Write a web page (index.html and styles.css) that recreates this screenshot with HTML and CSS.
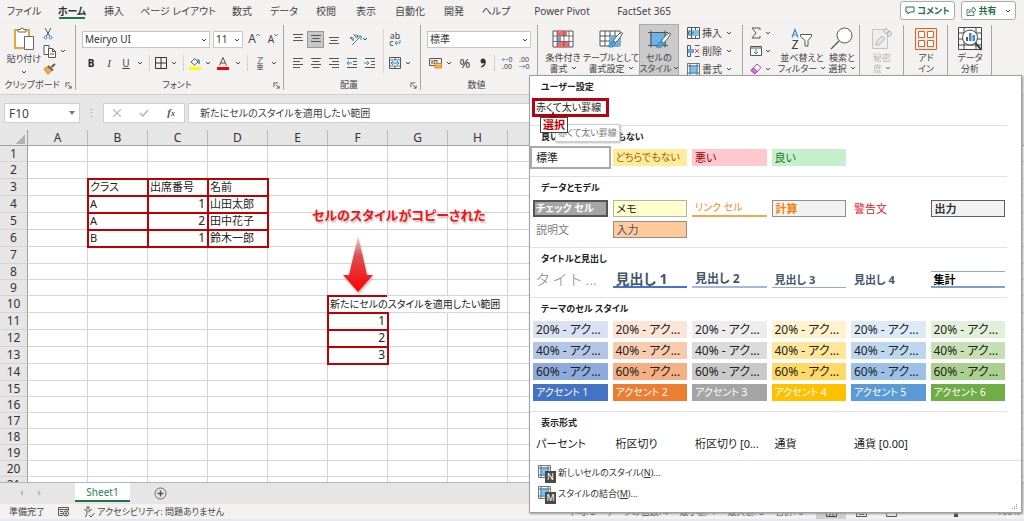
FILE: index.html
```html
<!DOCTYPE html>
<html lang="ja">
<head>
<meta charset="utf-8">
<title>セルのスタイル</title>
<link rel="stylesheet" href="styles.css">
</head>
<body>
<svg class="symbols" width="0" height="0" aria-hidden="true">
  <symbol id="chev" viewBox="0 0 6 4"><path d="M1 1l2 2 2-2" fill="none" stroke="#444" stroke-width="1"/></symbol>
  <symbol id="launch" viewBox="0 0 8 8"><path d="M1 6V1h5M3 3l4 4M7 4v3H4" fill="none" stroke="#555" stroke-width="1"/></symbol>
  <symbol id="brush" viewBox="0 0 16 18"><path d="M14.500 1.500C12 2.500 8.500 6 6.500 9.500l2 2C11.500 9 15 4.500 15.500 2z" fill="#fff" stroke="#555"/><path d="M6 10C3.500 10 3.500 13 1 15.500c3 1.500 7 .5 7.500-3z" fill="#4a9edb" stroke="#2f7fbf" stroke-width=".6"/></symbol>
  <symbol id="cellgrid" viewBox="0 0 13 13"><path d="M.5.5h12v12H.5z" fill="#fff" stroke="#777"/><path d="M.5 3h12M.5 10h12M3 .5v12M10 .5v12" stroke="#666" fill="none"/><path d="M3 3h7v7H3z" fill="#7ec0ee" stroke="#3b8ecb"/></symbol>
</svg>

<nav class="tabs">
  <button class="tab w48">ファイル</button>
  <button class="tab w48 active">ホーム</button>
  <button class="tab w36">挿入</button>
  <button class="tab w92">ページ レイアウト</button>
  <button class="tab w36">数式</button>
  <button class="tab w48">データ</button>
  <button class="tab w36">校閲</button>
  <button class="tab w44">表示</button>
  <button class="tab w44">自動化</button>
  <button class="tab w44">開発</button>
  <button class="tab w40">ヘルプ</button>
  <button class="tab w92">Power Pivot</button>
  <button class="tab w72">FactSet 365</button>
  <div class="tab-actions">
    <button class="pill"><svg width="10" height="9" viewBox="0 0 10 9"><path d="M1 1h8v5H5L3 8V6H1z" fill="none" stroke="#217346"/></svg>コメント</button>
    <button class="pill"><svg width="10" height="10" viewBox="0 0 10 10"><path d="M3 3.500H1v6h7V7M3 7c0-3 2-4 4-4V1l3 3-3 3V5C5 5 4 5.500 3 7z" fill="none" stroke="#217346" stroke-width=".8"/></svg>共有<svg class="chev" viewBox="0 0 6 4"><use href="#chev"/></svg></button>
  </div>
</nav>

<div class="ribbon">
  <section class="group g-clip">
    <div class="group-body">
      <button class="big">
        <svg width="22" height="24" viewBox="0 0 22 24"><path d="M2 3h14v18H2z" fill="#fff" stroke="#e8a33d" stroke-width="2"/><path d="M5 5V2.500h2.500a1.500 1.500 0 0 1 3 0H13V5z" fill="#fff" stroke="#666"/><path d="M11.500 9.500h9v13h-9z" fill="#fff" stroke="#666"/></svg>
        <span>貼り付け</span><svg class="chev" viewBox="0 0 6 4"><use href="#chev"/></svg>
      </button>
      <div class="stack">
        <button class="tool" aria-label="切り取り"><svg width="10" height="13" viewBox="0 0 10 13"><path d="M2 1l4.500 8M8 1L3.500 9" stroke="#555" fill="none"/><circle cx="2.500" cy="10.500" r="1.500" fill="none" stroke="#2f8fd0"/><circle cx="7.500" cy="10.500" r="1.500" fill="none" stroke="#2f8fd0"/></svg></button>
        <button class="tool" aria-label="コピー"><svg width="14" height="13" viewBox="0 0 14 13"><path d="M1 .5h5v9H1z" fill="#fff" stroke="#555"/><path d="M5.500 3.500h4l3 3v6h-7zM9.500 3.500v3h3M7 9h4" fill="#fff" stroke="#555"/></svg><svg class="chev" viewBox="0 0 6 4"><use href="#chev"/></svg></button>
        <button class="tool" aria-label="書式のコピー"><svg width="13" height="12" viewBox="0 0 13 12"><path d="M12 1L8.500 4M5 3l5 4.500" stroke="#555" stroke-width="2" fill="none"/><path d="M4 3.500L1 6l4 5.500 4-4z" fill="#f0a84a" stroke="#c77b1d" stroke-width=".7"/></svg></button>
      </div>
    </div>
    <div class="group-label">クリップボード<svg class="launch" viewBox="0 0 8 8"><use href="#launch"/></svg></div>
  </section>

  <section class="group g-font">
    <div class="rows">
      <div class="row gap3">
        <span class="combo w128"><select aria-label="フォント"><option>Meiryo UI</option></select><svg class="chev" viewBox="0 0 6 4"><use href="#chev"/></svg></span>
        <span class="combo w30"><select aria-label="サイズ"><option>11</option></select><svg class="chev" viewBox="0 0 6 4"><use href="#chev"/></svg></span>
        <button class="tool w16 grow" aria-label="拡大">A<svg width="4" height="4" viewBox="0 0 4 4"><path d="M0 3l2-2 2 2" stroke="#2f8fd0" fill="none"/></svg></button>
        <button class="tool w16 shrink" aria-label="縮小">A<svg width="4" height="4" viewBox="0 0 4 4"><path d="M0 1l2 2 2-2" stroke="#2f8fd0" fill="none"/></svg></button>
      </div>
      <div class="row">
        <button class="tool w18 b">B</button><button class="tool w18 i">I</button><button class="tool w16 u">U</button><button class="tool w12" aria-label="下線"><svg class="chev" viewBox="0 0 6 4"><use href="#chev"/></svg></button>
        <i class="vsep"></i>
        <button class="tool w14" aria-label="罫線"><svg width="12" height="12" viewBox="0 0 12 12"><path d="M.5.5h11v11H.5zM6 0v12M0 6h12" fill="none" stroke="#333"/></svg></button><button class="tool w12" aria-label="罫線の種類"><svg class="chev" viewBox="0 0 6 4"><use href="#chev"/></svg></button>
        <i class="vsep"></i>
        <button class="tool w14" aria-label="塗りつぶし"><svg width="12" height="13" viewBox="0 0 12 13"><path d="M2 5l4-3.500L9 5 5.500 8z" fill="#fff" stroke="#555"/><path d="M8.500 2.500C10 3 10.500 5 10 7" stroke="#2f8fd0" stroke-width="1.500" fill="none"/><path d="M0 10h12v3H0z" fill="#ff0"/></svg></button><button class="tool w12" aria-label="塗りつぶしの色"><svg class="chev" viewBox="0 0 6 4"><use href="#chev"/></svg></button>
        <button class="tool w18" aria-label="フォントの色"><svg width="12" height="13" viewBox="0 0 12 13"><path d="M2.500 8.500L6 .5l3.500 8M3.500 6h5" stroke="#555" fill="none"/><path d="M0 10h12v3H0z" fill="#f00"/></svg></button><button class="tool w12" aria-label="文字色"><svg class="chev" viewBox="0 0 6 4"><use href="#chev"/></svg></button>
        <i class="vsep"></i>
        <button class="tool w16 ruby"><span>ア</span><span>亜</span></button><button class="tool w12" aria-label="ふりがな"><svg class="chev" viewBox="0 0 6 4"><use href="#chev"/></svg></button>
      </div>
    </div>
    <div class="group-label">フォント<svg class="launch" viewBox="0 0 8 8"><use href="#launch"/></svg></div>
  </section>

  <section class="group g-align">
    <div class="group-body">
      <div class="rows">
        <div class="row">
          <button class="tool w18" aria-label="上揃え"><svg width="12" height="12" viewBox="0 0 12 12"><path d="M1 1.500h10M2.500 4.500h7M1 7.500h10" stroke="#555"/></svg></button>
          <button class="tool w18 on" aria-label="中央揃え"><svg width="12" height="12" viewBox="0 0 12 12"><path d="M1 2.500h10M2.500 5.500h7M1 8.500h10" stroke="#555"/></svg></button>
          <button class="tool w18" aria-label="下揃え"><svg width="12" height="12" viewBox="0 0 12 12"><path d="M1 4.500h10M2.500 7.500h7M1 10.500h10" stroke="#555"/></svg></button>
          <button class="tool w30" aria-label="方向"><svg width="13" height="13" viewBox="0 0 13 13"><path d="M3 12L12 3M12 3v4M12 3H8" stroke="#2f8fd0" fill="none"/><path d="M1.500 5.500a1.500 1.500 0 1 1 2.500 1.500M1 4l3.500 4M4.500 1l3 4a1.500 1.500 0 1 0-1-3" fill="none" stroke="#555" stroke-width=".9"/></svg><svg class="chev" viewBox="0 0 6 4"><use href="#chev"/></svg></button>
        </div>
        <div class="row">
          <button class="tool w18" aria-label="左揃え"><svg width="12" height="12" viewBox="0 0 12 12"><path d="M1 1.500h10M1 4.500h7M1 7.500h10M1 10.500h7" stroke="#555"/></svg></button>
          <button class="tool w18" aria-label="中央"><svg width="12" height="12" viewBox="0 0 12 12"><path d="M1 1.500h10M2.500 4.500h7M1 7.500h10M2.500 10.500h7" stroke="#555"/></svg></button>
          <button class="tool w18" aria-label="右揃え"><svg width="12" height="12" viewBox="0 0 12 12"><path d="M1 1.500h10M4 4.500h7M1 7.500h10M4 10.500h7" stroke="#555"/></svg></button>
          <button class="tool w18" aria-label="インデント解除"><svg width="12" height="12" viewBox="0 0 12 12"><path d="M1 1.500h10M7 4.500h4M7 7.500h4M1 10.500h10" stroke="#555"/><path d="M6 6H1m2-2L1 6l2 2" stroke="#2f8fd0" fill="none"/></svg></button>
          <button class="tool w18" aria-label="インデント"><svg width="12" height="12" viewBox="0 0 12 12"><path d="M1 1.500h10M7 4.500h4M7 7.500h4M1 10.500h10" stroke="#555"/><path d="M0 6h5M3 4l2 2-2 2" stroke="#2f8fd0" fill="none"/></svg></button>
        </div>
      </div>
      <i class="vsep tall"></i>
      <div class="rows">
        <div class="row"><button class="tool w14 wrap" aria-label="折り返し"><span>ab</span><span>c<svg width="7" height="6" viewBox="0 0 7 6"><path d="M6 0v3H1m2-2L1 3l2 2" stroke="#2f8fd0" fill="none"/></svg></span></button></div>
        <div class="row"><button class="tool w14" aria-label="結合"><svg width="12" height="12" viewBox="0 0 12 12"><path d="M.5.5h11v11H.5zM.5 3h11M.5 9h11M6 .5V3M6 9v2.500" stroke="#555" fill="#fff"/><path d="M1 3.500h10v5H1z" fill="#d6ecfa"/><path d="M2 6h8M4 4L2 6l2 2M8 4l2 2-2 2" stroke="#2f8fd0" fill="none"/></svg></button><button class="tool w12" aria-label="結合の種類"><svg class="chev" viewBox="0 0 6 4"><use href="#chev"/></svg></button></div>
      </div>
    </div>
    <div class="group-label">配置<svg class="launch" viewBox="0 0 8 8"><use href="#launch"/></svg></div>
  </section>

  <section class="group g-num">
    <div class="rows">
      <div class="row"><span class="combo w104"><select aria-label="表示形式"><option>標準</option></select><svg class="chev" viewBox="0 0 6 4"><use href="#chev"/></svg></span></div>
      <div class="row">
        <button class="tool w16" aria-label="通貨"><svg width="13" height="12" viewBox="0 0 13 12"><path d="M.5 1.500h12v7H.5zM3 3v4M5 3.500h3v3H5z" fill="none" stroke="#555"/><path d="M6 6.500h6.500V11H6zM6 9h6" fill="#f6c27a" stroke="#e08a1e"/></svg></button><button class="tool w12" aria-label="通貨の種類"><svg class="chev" viewBox="0 0 6 4"><use href="#chev"/></svg></button>
        <button class="tool w20 pct">%</button><button class="tool w16" aria-label="桁区切り"><svg width="6" height="10" viewBox="0 0 6 10"><circle cx="3" cy="3" r="2.500" fill="#333"/><path d="M5 3c.5 3-1 5-4 6" stroke="#333" stroke-width="1.300" fill="none"/></svg></button>
        <i class="vsep"></i>
        <button class="tool w16 dec"><span><em>←</em>0</span><span>.00</span></button><button class="tool w18 dec"><span>.00</span><span><em>→</em>0</span></button>
      </div>
    </div>
    <div class="group-label">数値</div>
  </section>

  <section class="group g-style">
    <button class="big w40"><svg width="22" height="22" viewBox="0 0 22 22"><path d="M1 3h20v16H1z" fill="#fff" stroke="#555"/><path d="M5 3h10v5H5zM5 13.500h12V19H5z" fill="#f9696b"/><path d="M5 8.500h4v5H5z" fill="#5ea9dd"/><path d="M1 8h20M1 13.500h20M5 3v16M12 3v16M17 3v16" stroke="#555" fill="none" stroke-width=".8"/></svg><span>条件付き<br>書式<svg class="chev" viewBox="0 0 6 4"><use href="#chev"/></svg></span></button>
    <button class="big w56"><svg width="24" height="22" viewBox="0 0 24 22"><path d="M1 3h20v15H1zM1 8h20M1 13h20M6 3v15M11 3v15M16 3v15" fill="#fff" stroke="#555"/><path d="M11 8h10v10H11z" fill="#6db3e8"/><use href="#brush" x="8" y="3" width="16" height="18"/></svg><span>テーブルとして<br>書式設定<svg class="chev" viewBox="0 0 6 4"><use href="#chev"/></svg></span></button>
    <button class="big w40 on"><svg width="24" height="22" viewBox="0 0 24 22"><path d="M1 4h20M1 17h20M4 2v17M18 2v17" fill="none" stroke="#555"/><path d="M4 4h14v13H4z" fill="#6db3e8" stroke="#555"/><use href="#brush" x="8" y="3" width="16" height="18"/></svg><span>セルの<br>スタイル<svg class="chev" viewBox="0 0 6 4"><use href="#chev"/></svg></span></button>
  </section>

  <section class="group g-cells">
    <div class="stack">
      <button class="line"><svg width="13" height="12" viewBox="0 0 13 12"><path d="M.5.5h12v11H.5zM.5 4h12M.5 8h12M4.500.5v11M8.500.5v11" fill="#fff" stroke="#555"/><path d="M5 3h7v6H5z" fill="#7ec0ee"/><path d="M7 6H1m2-2L1 6l2 2" stroke="#1976b8" fill="none"/></svg><span>挿入</span><svg class="chev" viewBox="0 0 6 4"><use href="#chev"/></svg></button>
      <button class="line"><svg width="13" height="12" viewBox="0 0 13 12"><path d="M.5 11.500V.5h3v11zM8 .5h4.500M8 11.500h4.500" fill="none" stroke="#555"/><path d="M1 4h6v4H1z" fill="#5ea9dd"/><path d="M8 4l4 4M12 4L8 8" stroke="#e34b4b"/></svg><span>削除</span><svg class="chev" viewBox="0 0 6 4"><use href="#chev"/></svg></button>
      <button class="line"><svg width="13" height="13" viewBox="0 0 13 13"><use href="#cellgrid"/></svg><span>書式</span><svg class="chev" viewBox="0 0 6 4"><use href="#chev"/></svg></button>
    </div>
  </section>

  <section class="group g-edit">
    <div class="stack">
      <button class="tool" aria-label="合計"><svg width="12" height="12" viewBox="0 0 12 12"><path d="M10 3V1H2l4 5-4 5h8V9" fill="none" stroke="#555"/></svg><svg class="chev" viewBox="0 0 6 4"><use href="#chev"/></svg></button>
      <button class="tool" aria-label="フィル"><svg width="12" height="12" viewBox="0 0 12 12"><path d="M.5 1.500h11v9H.5zM.5 3h11" fill="#fff" stroke="#555"/><path d="M6 4v5M4 7l2 2 2-2" stroke="#2f8fd0" fill="none"/></svg><svg class="chev" viewBox="0 0 6 4"><use href="#chev"/></svg></button>
      <button class="tool" aria-label="クリア"><svg width="12" height="12" viewBox="0 0 12 12"><path d="M1 7.500L7 1l4 3.500L5 11z" fill="#fff" stroke="#a349a4"/><path d="M1 7.500L3.500 5l4 3.500L5 11z" fill="#c77fd0" stroke="#a349a4"/></svg><svg class="chev" viewBox="0 0 6 4"><use href="#chev"/></svg></button>
    </div>
    <button class="big w44"><svg width="22" height="22" viewBox="0 0 22 22"><path d="M1 9.500L4 1.500l3 8M2 7h4" stroke="#2f8fd0" fill="none" stroke-width="1.200"/><path d="M1.500 12.500h5l-5 8h5.500" stroke="#444" fill="none" stroke-width="1.200"/><path d="M9.500 6.500h11v2L17 12.500V18h-3v-5.500L9.500 8.500z" stroke="#555" fill="#fff"/></svg><span>並べ替えと<br>フィルター<svg class="chev" viewBox="0 0 6 4"><use href="#chev"/></svg></span></button>
    <button class="big w36"><svg width="24" height="24" viewBox="0 0 24 24"><circle cx="14.500" cy="8.500" r="7.500" fill="#fff" stroke="#555"/><path d="M9 14L1 22" stroke="#555" stroke-width="1.300"/></svg><span>検索と<br>選択<svg class="chev" viewBox="0 0 6 4"><use href="#chev"/></svg></span></button>
  </section>
  <section class="group g-one">
    <button class="big muted" disabled><svg width="22" height="24" viewBox="0 0 22 24"><path d="M1.500 2.500h15v19h-15z" fill="#eee" stroke="#bbb"/><path d="M5 15l6-6 3 3-6 6H5zM12 4l3-3 3 3-3 3zM16 7l3-3 2 3-3 3z" fill="#ddd" stroke="#aaa"/></svg><span>秘密<br>度<svg class="chev" viewBox="0 0 6 4"><use href="#chev"/></svg></span></button>
  </section>
  <section class="group g-one">
    <button class="big"><svg width="22" height="22" viewBox="0 0 22 22"><path d="M.5.500h21v21H.5z" fill="#fbe9df" stroke="#d9622b"/><path d="M3.500 3.500h6v6h-6zM12.500 3.500h6v6h-6zM3.500 12.500h6v6h-6zM12.500 12.500h6v6h-6z" fill="#fff" stroke="#d9622b"/></svg><span>アド<br>イン</span></button>
  </section>
  <section class="group g-one">
    <button class="big"><svg width="24" height="24" viewBox="0 0 24 24"><path d="M.5.500h23v22H.5zM0 6h24M0 12h24M0 18h24M6 0v22M18 0v22" fill="#fff" stroke="#444"/><circle cx="12" cy="10.500" r="7.500" fill="#fff" stroke="#444"/><path d="M8 10h2v4H8z" fill="#555"/><path d="M11 6h2.500v8H11zM14.500 8H17v6h-2.500z" fill="#3b8ecb"/><path d="M17.500 16l6 7" stroke="#444" stroke-width="2"/></svg><span>データ<br>分析</span></button>
  </section>
</div>

<div class="formula-row">
  <label class="namebox"><input aria-label="名前ボックス" value="F10"><svg width="6" height="4" viewBox="0 0 6 4"><path d="M0 0h6L3 4z" fill="#777"/></svg></label>
  <span class="dots">⋮</span>
  <div class="fx-buttons">
    <button aria-label="キャンセル"><svg width="8" height="8" viewBox="0 0 8 8"><path d="M0 0l8 8M8 0L0 8" stroke="#b5b5b5" stroke-width="1.200"/></svg></button>
    <button aria-label="入力"><svg width="10" height="8" viewBox="0 0 10 8"><path d="M1 4l3 3 5-6" stroke="#b5b5b5" stroke-width="1.500" fill="none"/></svg></button>
    <button class="fx">f<small>x</small></button>
  </div>
  <input class="formula" aria-label="数式バー" value="新たにセルのスタイルを適用したい範囲">
</div>

<main class="sheet">
  <table class="grid" id="grid"></table>
  <p class="callout">セルのスタイルがコピーされた</p>
  <svg class="callout-arrow" width="34" height="60" viewBox="0 0 34 60"><defs><linearGradient id="fade" x1="0" y1="0" x2="0" y2="1"><stop offset="0" stop-color="#f3a5a5" stop-opacity=".5"/><stop offset=".35" stop-color="#dc5050"/><stop offset="1" stop-color="#f00"/></linearGradient></defs><path d="M16 1l9 39h6L16 57 1 40h6z" fill="url(#fade)"/></svg>
</main>

<footer class="sheetbar">
  <span class="arrow left"></span><span class="arrow right"></span>
  <button class="sheet-tab">Sheet1</button>
  <button class="add" aria-label="新しいシート"><svg width="13" height="13" viewBox="0 0 13 13"><circle cx="6.500" cy="6.500" r="5.500" fill="none" stroke="#666"/><path d="M6.500 3.500v6M3.500 6.500h6" stroke="#555" stroke-width="1.500"/></svg></button>
</footer>
<div class="status">
  <span>準備完了</span>
  <svg width="12" height="11" viewBox="0 0 12 11"><path d="M.5 9.500v-8h10V5M.5 3.500h10M2 5.500h3M2 7.500h3M.5 9.500H5" fill="none" stroke="#555"/><circle cx="8" cy="7.500" r="2.500" fill="none" stroke="#444"/><circle cx="8" cy="7.500" r="1" fill="#444"/></svg>
  <span class="access"><svg width="12" height="12" viewBox="0 0 12 12"><circle cx="5" cy="1.800" r="1.200" fill="none" stroke="#555"/><path d="M1 3.500l3 1v3L2.500 11M9 3.500l-3 1v2M6 9l2 2 3.500-4" fill="none" stroke="#555"/></svg>アクセシビリティ: 問題ありません</span>
  <div class="stats"><span>平均: 2</span><span>データの個数: 4</span><span>最小値: 1</span><span>最大値: 3</span><span>合計: 6</span></div>
  <div class="views">
    <i class="view on"><svg width="11" height="10" viewBox="0 0 11 10"><path d="M.5.500h10v9H.5zM0 5h11M4 0v10M7 0v10" fill="none" stroke="#444"/></svg></i>
    <i class="view"><svg width="11" height="10" viewBox="0 0 11 10"><path d="M.5.500h10v9H.5zM3 2.500h5v5H3z" fill="none" stroke="#555"/></svg></i>
    <i class="view"><svg width="11" height="10" viewBox="0 0 11 10"><path d="M.5.500h10v9H.5z" fill="none" stroke="#555"/></svg></i>
  </div>
  <i class="knob"></i>
  <span class="zoom">100%</span>
</div>

<div class="menu">
  <section>
    <h2>ユーザー設定</h2>
    <div class="swatches"><button class="sw custom">赤くて太い罫線</button></div>
  </section>
  <section class="roomy">
    <h2>良い、悪い、どちらでもない</h2>
    <div class="swatches">
      <button class="sw current">標準</button><button class="sw neutral">どちらでもない</button><button class="sw bad">悪い</button><button class="sw good">良い</button>
    </div>
  </section>
  <section>
    <h2>データとモデル</h2>
    <div class="swatches">
      <button class="sw check">チェック セル</button><button class="sw memo">メモ</button><button class="sw link">リンク セル</button><button class="sw calc">計算</button><button class="sw warn">警告文</button><button class="sw out">出力</button>
      <button class="sw desc">説明文</button><button class="sw in">入力</button>
    </div>
  </section>
  <section>
    <h2>タイトルと見出し</h2>
    <div class="swatches">
      <button class="sw title">タ イ ト ...</button><button class="sw h-1">見出し 1</button><button class="sw h-2">見出し 2</button><button class="sw h-3">見出し 3</button><button class="sw h-4">見出し 4</button><button class="sw total">集計</button>
    </div>
  </section>
  <section class="roomy">
    <h2>テーマのセル スタイル</h2>
    <div class="swatches theme">
      <button class="sw a1 p20">20% - アク...</button><button class="sw a2 p20">20% - アク...</button><button class="sw a3 p20">20% - アク...</button><button class="sw a4 p20">20% - アク...</button><button class="sw a5 p20">20% - アク...</button><button class="sw a6 p20">20% - アク...</button>
      <button class="sw a1 p40">40% - アク...</button><button class="sw a2 p40">40% - アク...</button><button class="sw a3 p40">40% - アク...</button><button class="sw a4 p40">40% - アク...</button><button class="sw a5 p40">40% - アク...</button><button class="sw a6 p40">40% - アク...</button>
      <button class="sw a1 p60">60% - アク...</button><button class="sw a2 p60">60% - アク...</button><button class="sw a3 p60">60% - アク...</button><button class="sw a4 p60">60% - アク...</button><button class="sw a5 p60">60% - アク...</button><button class="sw a6 p60">60% - アク...</button>
      <button class="sw a1 full">アクセント 1</button><button class="sw a2 full">アクセント 2</button><button class="sw a3 full">アクセント 3</button><button class="sw a4 full">アクセント 4</button><button class="sw a5 full">アクセント 5</button><button class="sw a6 full">アクセント 6</button>
    </div>
  </section>
  <section class="last">
    <h2>表示形式</h2>
    <div class="swatches">
      <button class="sw">パーセント</button><button class="sw">桁区切り</button><button class="sw">桁区切り [0...</button><button class="sw">通貨</button><button class="sw">通貨 [0.00]</button>
    </div>
  </section>
  <div class="commands">
    <button class="cmd"><span class="cmd-icon"><svg width="13" height="13" viewBox="0 0 13 13"><use href="#cellgrid"/></svg><kbd>N</kbd></span>新しいセルのスタイル(<u>N</u>)...</button>
    <button class="cmd"><span class="cmd-icon"><svg width="13" height="13" viewBox="0 0 13 13"><use href="#cellgrid"/></svg><kbd>M</kbd></span>スタイルの結合(<u>M</u>)...</button>
    <svg class="grip" width="6" height="6" viewBox="0 0 6 6"><path d="M4 0h1v1H4zM2 2h1v1H2zM4 2h1v1H4zM0 4h1v1H0zM2 4h1v1H2zM4 4h1v1H4z" fill="#999"/></svg>
  </div>
  <div class="tooltip">赤くて太い罫線</div>
  <div class="pick">選択</div>
  <svg class="pick-arrow" width="6" height="7" viewBox="0 0 6 7"><path d="M3 0l3 7H0z" fill="#8a1010"/></svg>
</div>
<script src="grid.js"></script>
</body>
</html>
```
FILE: grid.js
```js
const columns = [..."ABCDEFGHIJKLMNOPQ"];
const cells = {
  B3: "クラス", C3: "出席番号", D3: "名前",
  B4: "A", C4: "1", D4: "山田太郎",
  B5: "A", C5: "2", D5: "田中花子",
  B6: "B", C6: "1", D6: "鈴木一郎",
  F10: "新たにセルのスタイルを適用したい範囲",
  F11: "1", F12: "2", F13: "3"
};
const shortRows = [1, 8, 9, 15, 16, 17, 18, 19, 20, 21];

function addCell(row, tag, text, className) {
  const cell = document.createElement(tag);
  cell.textContent = text;
  if (className) cell.className = className;
  row.append(cell);
}

const table = document.getElementById("grid");
const head = table.createTHead().insertRow();
addCell(head, "th", "", "corner");
columns.forEach(name => addCell(head, "th", name));

const body = table.createTBody();
for (let r = 1; r <= 21; r++) {
  const row = body.insertRow();
  if (shortRows.includes(r)) row.className = "short";
  addCell(row, "th", r);
  columns.forEach(name => {
    const key = name + r;
    const text = cells[key] || "";
    let className = "";
    if (key === "F10") className = "spill-start";
    else if (key === "G10") className = "spill";
    else if (text) className = /^\d+$/.test(text) ? "boxed num" : "boxed";
    addCell(row, "td", text, className);
  });
}
```
FILE: styles.css
```css
* { box-sizing: border-box; }
body {
  margin: 0;
  height: 100vh;
  display: flex;
  flex-direction: column;
  overflow: hidden;
  position: relative;
  background: #f3f2f1;
  color: #444;
  font: 10px/12px "Noto Sans", "Noto Sans CJK JP", sans-serif;
  font-feature-settings: "palt";
}
button, input, select {
  font: inherit;
  font-feature-settings: inherit;
  color: inherit;
  margin: 0;
  padding: 0;
  border: 0;
  background: none;
}
svg { flex: none; }
.symbols { position: absolute; }
.chev { width: 6px; height: 4px; }
.w12 { width: 12px; } .w14 { width: 14px; } .w16 { width: 16px; } .w18 { width: 18px; }
.w20 { width: 20px; } .w30 { width: 30px; } .w36 { width: 36px; } .w40 { width: 40px; }
.w44 { width: 44px; } .w48 { width: 48px; } .w56 { width: 56px; } .w72 { width: 72px; }
.w92 { width: 92px; } .w104 { width: 104px; } .w128 { width: 128px; }

/* tabs */
.tabs { display: flex; height: 23px; flex: none; }
.tab { flex: none; white-space: nowrap; height: 22px; }
.tab.active { font-weight: bold; color: #333; }
.tab.active::after { content: ""; display: block; width: 26px; height: 2px; margin: 0 auto -2px; background: #217346; }
.tab-actions { margin-left: auto; display: flex; gap: 6px; padding: 1px 8px 0 0; }
.pill {
  display: flex; align-items: center; justify-content: center; gap: 2px;
  width: 55px; height: 19px;
  background: #fff; border: 1px solid #aaa; border-radius: 3px;
  color: #217346; font-weight: bold; font-size: 9px; white-space: nowrap;
}
.pill .chev { margin-left: 6px; }

/* ribbon */
.ribbon { display: flex; flex: none; height: 72px; border-bottom: 1px solid #d0d0d0; box-shadow: 0 1px 2px #ccc; }
.group { position: relative; display: flex; flex: none; }
.group::after { content: ""; position: absolute; right: 0; top: 2px; bottom: 4px; width: 1px; background: #a6a6a6; }
.g-clip, .g-font, .g-align, .g-num { flex-direction: column; justify-content: space-between; }
.g-clip { width: 76px; }
.g-font { width: 208px; padding-left: 6px; }
.g-align { width: 137px; padding-left: 5px; }
.g-num { width: 117px; padding-left: 6px; }
.g-style { width: 141px; padding-left: 5px; }
.g-cells { width: 64px; padding-left: 8px; }
.g-edit { width: 117px; padding-left: 7px; }
.g-one { width: 44px; justify-content: center; }
.group-body { display: flex; }
.group-label { text-align: center; height: 15px; padding-right: 12px; position: relative; white-space: nowrap; font-size: 9px; }
.launch { position: absolute; right: 4px; top: 3px; width: 7px; height: 7px; }
.rows { display: flex; flex-direction: column; gap: 6px; padding-top: 7px; }
.row { display: flex; align-items: center; height: 18px; }
.gap3 { gap: 3px; }
.stack { display: flex; flex-direction: column; padding-top: 1px; }
.stack .tool { height: 18px; gap: 3px; justify-content: flex-start; }
.g-clip .stack { padding-left: 1px; }
.tool { display: flex; align-items: center; justify-content: center; flex: none; height: 18px; }
.tool.on { background: #c8c8c8; border: 1px solid #999; height: 17px; width: 17px; margin-right: 1px; }
.big { display: flex; flex-direction: column; align-items: center; text-align: center; gap: 1px; padding-top: 4px; line-height: 11px; white-space: nowrap; font-size: 9px; }
.big svg:first-child { height: 24px; }
.big span { display: block; }
.big span .chev { margin: 0 0 2px 3px; }
.g-clip .big { width: 42px; padding-left: 6px; gap: 2px; }
.g-clip .big > .chev { margin-top: 4px; }
.big.on { background: #cacaca; border: 1px solid #aaa; border-bottom: 0; height: 53px; padding-top: 3px; margin-top: 1px; }
.big.on svg:first-child { height: 23px; }
.big.on span .chev { margin-left: 1px; }
.muted { color: #aaa; opacity: .8; }
.line { display: flex; align-items: center; gap: 2px; height: 18px; }
.line span { width: 20px; text-align: left; margin-right: 2px; white-space: nowrap; }
.combo { position: relative; display: block; height: 17px; background: #fff; border: 1px solid #c6c6c6; }
.combo select { appearance: none; width: 100%; height: 15px; padding-left: 2px; line-height: 15px; color: #333; }
.combo .chev { position: absolute; right: 2px; top: 6px; }
.grow { font-size: 12px; } .shrink { font-size: 10px; }
.grow svg, .shrink svg { align-self: flex-start; margin-top: 3px; }
.b { font-weight: bold; color: #222; }
.i { font-family: "Liberation Serif", serif; font-style: italic; font-size: 11px; }
.u { text-decoration: underline; }
.pct { font-size: 13px; color: #333; }
.vsep { flex: none; width: 1px; height: 16px; margin: 0 4px 0 3px; background: #d2d2d2; }
.vsep.tall { height: 44px; margin: 6px 4px 0; }
.ruby, .wrap, .dec { flex-direction: column; line-height: 7px; font-size: 7px; }
.wrap { font-size: 9px; }
.dec span { display: block; white-space: nowrap; }
.dec em { font-style: normal; color: #1f87cc; }
.g-edit .big, .g-style .big { flex: none; }
.g-edit .stack { width: 30px; }

/* formula row */
.formula-row { display: flex; flex: none; height: 35px; padding: 8px 14px 7px 4px; background: #e6e6e6; }
.namebox { display: flex; align-items: center; width: 76px; background: #fff; border: 1px solid #d0d0d0; padding-right: 4px; }
.namebox input { flex: 1; min-width: 0; padding-left: 4px; font-size: 12px; }
.dots { width: 23px; text-align: center; font-size: 11px; line-height: 20px; color: #999; }
.fx-buttons { display: flex; align-items: center; justify-content: space-around; width: 82px; background: #fff; border: 1px solid #d0d0d0; margin-right: 3px; }
.fx { font-family: "Liberation Serif", serif; font-size: 11px; font-style: italic; font-weight: bold; color: #555; }
.fx small { font-size: 8px; }
.formula { flex: 1; background: #fff; border: 1px solid #d0d0d0; padding-left: 11px; }

/* worksheet */
.sheet { position: relative; flex: 1; overflow: hidden; background: #fff; }
.grid { table-layout: fixed; width: 1048px; border-spacing: 0; font-size: 11px; line-height: 14px; color: #222; }
.grid th, .grid td { width: 60px; height: 17px; padding: 0 2px; font-weight: normal; white-space: nowrap; border: solid #d4d4d4; border-width: 0 1px 1px 0; text-align: left; }
.grid th { background: #e6e6e6; text-align: center; color: #333; font-size: 12px; }
.grid thead th, .grid .short th, .grid .short td { height: 16px; }
.grid thead th { border-bottom-color: #a0a0a0; border-right-color: #bbb; }
.grid tbody th, .grid .corner { width: 28px; border-right-color: #a0a0a0; }
.grid .corner { background: linear-gradient(135deg, #e6e6e6 50%, #b2b2b2 50%) 15px 4px / 10px 10px no-repeat #e6e6e6; }
.grid .boxed { outline: 2px solid #c00000; outline-offset: -1px; }
.grid .num { text-align: right; font-size: 12px; }
.grid .spill-start { box-shadow: inset 1px 1px #c00000, -1px -1px #c00000; border-right-color: #fff; font-size: 10px; }
.grid .spill { border-right-color: #fff; }
.callout { position: absolute; left: 312px; top: 76px; margin: 0; font-size: 13px; line-height: 18px; font-weight: bold; color: #f01414; white-space: nowrap; text-shadow: 1px 2px 2px #bbb; }
.callout-arrow { position: absolute; left: 342px; top: 105px; filter: drop-shadow(1px 2px 1px #bbb); }

/* sheet bar and status */
.sheetbar { display: flex; flex: none; align-items: flex-start; height: 22px; background: #e6e6e6; border-top: 1px solid #b5b5b5; }
.arrow { margin-top: 7px; border: 3px solid transparent; }
.arrow.left { margin-left: 17px; border-right-color: #bbb; }
.arrow.right { margin-left: 15px; border-left-color: #bbb; }
.sheet-tab { margin-left: 31px; width: 55px; height: 19px; background: #fff; border-bottom: 2px solid #217346; color: #2a8250; }
.add { margin: 4px 0 0 24px; height: 13px; }
.status { display: flex; flex: none; align-items: center; height: 17px; padding-left: 9px; gap: 13px; border-bottom: 2px solid #e3e8f2; font-size: 9px; white-space: nowrap; }
.access { display: flex; align-items: center; gap: 2px; }
.stats { display: flex; gap: 11px; margin-left: auto; }
.views { display: flex; }
.view { display: flex; width: 30px; height: 15px; align-items: center; justify-content: center; }
.view.on { background: #d0d0d0; }
.knob { width: 4px; height: 10px; margin-left: 35px; background: #444; }
.zoom { margin: 0 4px 0 26px; }

/* style gallery */
.menu { position: absolute; right: 2px; top: 75px; width: 493px; background: #fff; border: 1px solid #a0a0a0; box-shadow: 1px 1px 2px #999; color: #333; }
.menu section { margin-right: 14px; padding: 3px 0 9px; border-bottom: 1px solid #e1e1e1; }
.menu .roomy { padding-bottom: 10px; }
.menu .last { margin-right: 0; padding-bottom: 8px; }
.menu h2 { margin: 0 0 4px 11px; font-size: 9px; line-height: 16px; color: #222; }
.swatches { display: grid; grid-template-columns: repeat(6, 1fr); gap: 4px 5px; padding: 0 2px 0 3px; }
.last .swatches { padding-right: 16px; }
.sw { height: 17px; padding: 0 3px; overflow: hidden; text-align: left; font-size: 11px; line-height: 15px; color: #222; white-space: nowrap; }
.custom { outline: 3px solid #b8000e; outline-offset: -2px; font-size: 10px; }
.current { outline: 2px solid #aaa; outline-offset: 1px; }
.neutral { background: #ffeb9c; color: #9c6500; font-size: 10px; }
.bad { background: #ffc7ce; color: #9c0006; }
.good { background: #c6efce; color: #1d7a1d; }
.check { background: #a5a5a5; color: #fff; font-weight: bold; font-size: 10px; border: 2px solid #555; padding: 0 1px; line-height: 13px; }
.memo { background: #ffffcc; border: 1px solid #b2b2b2; }
.link { color: #f08a1c; border-bottom: 2px solid #eda94b; font-size: 10px; }
.calc { background: #f2f2f2; border: 1px solid #8f8f8f; color: #fa7d00; font-weight: bold; }
.warn { color: #e0242c; }
.out { background: #f2f2f2; border: 1px solid #5f5f5f; font-weight: bold; color: #333; }
.desc { color: #808080; }
.in { background: #ffcc99; border: 1px solid #8f8f8f; color: #4c4c76; }
.title { font-size: 15px; color: #7b8592; font-weight: 300; }
.h-1, .h-2, .h-3, .h-4 { color: #44546a; font-weight: bold; }
.h-1 { font-size: 14px; border-bottom: 2px solid #4472c4; }
.h-2 { font-size: 12px; border-bottom: 2px solid #a2b8e1; }
.h-3 { border-bottom: 1px solid #8ea9db; }
.total { font-weight: bold; color: #000; border-top: 1px solid #8ea9db; border-bottom: 2px solid #7f9fd4; line-height: 13px; }
.theme .p20, .theme .p40, .theme .p60 { font-size: 12px; }
.full { color: #fff; font-size: 10px; }
.a1.p20 { background: #d9e1f2; } .a1.p40 { background: #b4c6e7; } .a1.p60 { background: #8ea9db; } .a1.full { background: #4472c4; }
.a2.p20 { background: #fce4d6; } .a2.p40 { background: #f8cbad; } .a2.p60 { background: #f4b084; } .a2.full { background: #ed7d31; }
.a3.p20 { background: #ededed; } .a3.p40 { background: #dbdbdb; } .a3.p60 { background: #c9c9c9; } .a3.full { background: #a5a5a5; }
.a4.p20 { background: #fff2cc; } .a4.p40 { background: #ffe699; } .a4.p60 { background: #ffd966; } .a4.full { background: #ffc000; }
.a5.p20 { background: #ddebf7; } .a5.p40 { background: #bdd7ee; } .a5.p60 { background: #9bc2e6; } .a5.full { background: #5b9bd5; }
.a6.p20 { background: #e2efda; } .a6.p40 { background: #c6e0b4; } .a6.p60 { background: #a9d08e; } .a6.full { background: #70ad47; }
.commands { position: relative; display: flex; flex-direction: column; height: 51px; padding: 1px 0 0 8px; }
.cmd { display: flex; align-items: center; height: 21px; font-size: 9px; white-space: nowrap; }
.cmd-icon { position: relative; width: 20px; height: 15px; display: block; text-align: left; }
.cmd-icon kbd { position: absolute; left: 7px; top: 6px; width: 11px; height: 12px; background: #4a4a4a; color: #fff; font: 9px/12px "Noto Sans", sans-serif; text-align: center; }
.grip { position: absolute; right: 3px; bottom: 2px; }
.tooltip { position: absolute; left: 25px; top: 48px; padding: 0 2px; border: 1px solid #ccc; background: #fff; color: #777; font-size: 9px; line-height: 16px; box-shadow: 1px 1px 2px #bbb; white-space: nowrap; }
.pick { position: absolute; left: 10px; top: 41px; width: 28px; border: 1px solid #444; background: #fff; color: #c00000; font-weight: bold; font-size: 11px; line-height: 14px; text-align: center; }
.pick-arrow { position: absolute; left: 20px; top: 35px; }
```
